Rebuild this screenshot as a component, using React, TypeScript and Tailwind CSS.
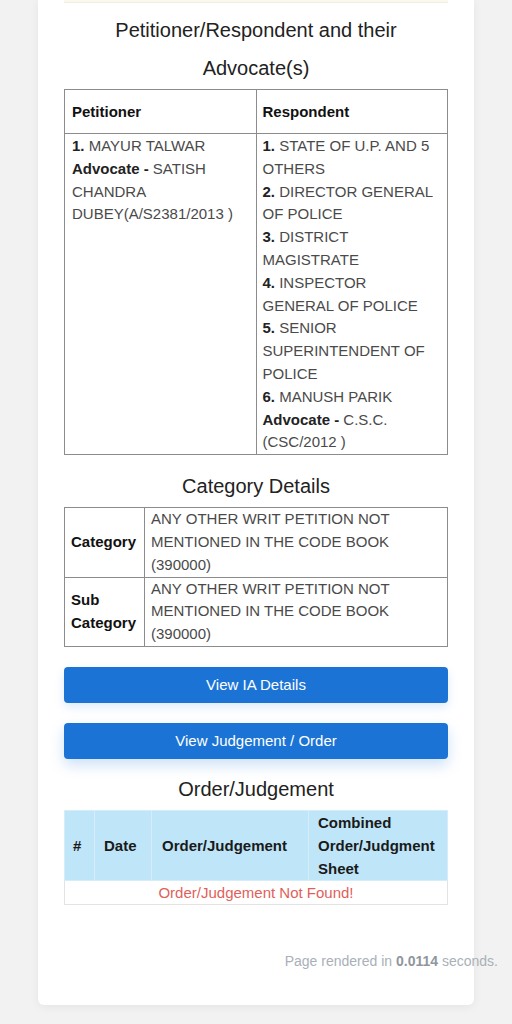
import React from 'react'

const font = { fontFamily: '"Liberation Sans", Arial, sans-serif' }

const respondents = [
  { n: '1.', name: 'STATE OF U.P. AND 5 OTHERS' },
  { n: '2.', name: 'DIRECTOR GENERAL OF POLICE' },
  { n: '3.', name: 'DISTRICT MAGISTRATE' },
  { n: '4.', name: 'INSPECTOR GENERAL OF POLICE' },
  { n: '5.', name: 'SENIOR SUPERINTENDENT OF POLICE' },
  { n: '6.', name: 'MANUSH PARIK' },
]

const categoryText = 'ANY OTHER WRIT PETITION NOT MENTIONED IN THE CODE BOOK (390000)'

export default function App() {
  return (
    <div
      className="min-h-[1024px] w-full bg-[#f2f2f2] font-['Liberation_Sans',Arial,sans-serif]"
      style={font}
    >
      <div className="ml-[38px] w-[436px] rounded-b-md bg-white px-[26px] pb-[34px] shadow-[0_2px_10px_rgba(0,0,0,0.06)]">
        {/* tail of the previous section */}
        <div className="h-[3px] bg-[#fbf9ee] border-b border-[#efefe6]" />

        {/* Parties */}
        <h4 className="mt-[8px] text-center text-[20px] leading-[38px] text-[#222]">
          Petitioner/Respondent and their Advocate(s)
        </h4>
        <table className="mt-[2px] w-full table-fixed border-collapse border border-[#8c8c8c] text-[15px] text-[#4a4a4a]">
          <thead>
            <tr>
              <th className="w-1/2 border border-[#8c8c8c] px-[7px] py-[10px] text-left font-bold leading-[23px] text-[#111]">
                Petitioner
              </th>
              <th className="w-1/2 border border-[#8c8c8c] px-[6px] py-[10px] text-left font-bold leading-[23px] text-[#111]">
                Respondent
              </th>
            </tr>
          </thead>
          <tbody className="leading-[22.8px]">
            <tr>
              <td className="border border-[#8c8c8c] px-[7px] pt-[1px] pb-0 align-top">
                <b className="text-[#222]">1.</b> MAYUR TALWAR
                <br />
                <b className="text-[#222]">Advocate -</b> SATISH CHANDRA DUBEY(A/S2381/2013 )
              </td>
              <td className="border border-[#8c8c8c] px-[6px] pt-[1px] pb-0 align-top">
                {respondents.map((r) => (
                  <div key={r.n}>
                    <b className="text-[#222]">{r.n}</b> {r.name}
                  </div>
                ))}
                <div>
                  <b className="text-[#222]">Advocate -</b> C.S.C. (CSC/2012 )
                </div>
              </td>
            </tr>
          </tbody>
        </table>

        {/* Category */}
        <h4 className="mt-[12px] text-center text-[20px] leading-[38px] text-[#222]">
          Category Details
        </h4>
        <table className="mt-[2px] w-full table-fixed border-collapse border border-[#8c8c8c] text-[15px] leading-[22.8px] text-[#4a4a4a]">
          <colgroup>
            <col className="w-[80px]" />
            <col />
          </colgroup>
          <tbody>
            <tr>
              <th className="border border-[#8c8c8c] px-[6px] text-left font-bold text-[#111]">
                Category
              </th>
              <td className="border border-[#8c8c8c] px-[6px] py-0">{categoryText}</td>
            </tr>
            <tr>
              <th className="border border-[#8c8c8c] px-[6px] text-left font-bold text-[#111]">
                Sub Category
              </th>
              <td className="border border-[#8c8c8c] px-[6px] py-0">{categoryText}</td>
            </tr>
          </tbody>
        </table>

        {/* Buttons */}
        <button className="mt-[20px] block h-[36px] w-full rounded-[4px] bg-[#1b74d5] text-[15px] text-white shadow-[0_4px_10px_rgba(27,116,213,0.15)]">
          View IA Details
        </button>
        <button className="mt-[20px] block h-[36px] w-full rounded-[4px] bg-[#1b74d5] text-[15px] text-white shadow-[0_6px_14px_rgba(27,116,213,0.22)]">
          View Judgement / Order
        </button>

        {/* Orders */}
        <h4 className="mt-[11px] text-center text-[20px] leading-[38px] text-[#222]">
          Order/Judgement
        </h4>
        <table className="mt-[2px] w-full table-fixed border-collapse border border-[#e3e3e3] text-[15px] leading-[23px]">
          <colgroup>
            <col className="w-[30px]" />
            <col className="w-[57px]" />
            <col className="w-[157px]" />
            <col />
          </colgroup>
          <thead className="bg-[#bfe6f8] text-[#1a1a1a]">
            <tr>
              <th className="border border-[#d6ecf6] px-[8px] py-0 text-left font-bold">#</th>
              <th className="border border-[#d6ecf6] px-[9px] py-0 text-left font-bold">Date</th>
              <th className="border border-[#d6ecf6] px-[10px] py-0 text-left font-bold">Order/Judgement</th>
              <th className="border border-[#d6ecf6] px-[9px] py-0 text-left font-bold">
                Combined Order/Judgment Sheet
              </th>
            </tr>
          </thead>
          <tbody>
            <tr>
              <td colSpan={4} className="border border-[#e3e3e3] py-0 text-center text-[#df5f5c]">
                Order/Judgement Not Found!
              </td>
            </tr>
          </tbody>
        </table>

        {/* Footer */}
        <div className="mt-[46px] -mr-[50px] text-right text-[14px] leading-[20px] text-[#a9b0b7]">
          Page rendered in <b className="text-[#8f969d]">0.0114</b> seconds.
        </div>
      </div>
    </div>
  )
}
